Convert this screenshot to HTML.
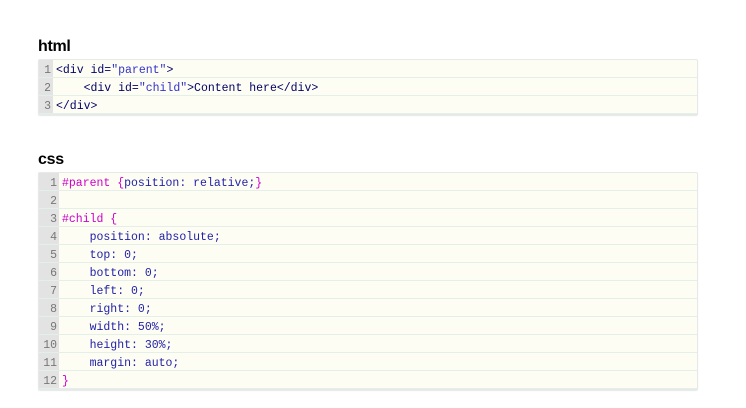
<!DOCTYPE html>
<html><head><style>
body{margin:0;width:746px;height:408px;background:#fff;position:relative;font-family:"Liberation Sans",sans-serif}
h3{position:absolute;left:38px;margin:0;font-size:16px;font-weight:bold;color:#000;letter-spacing:-0.3px}
.blk{position:absolute;left:38px;width:658px;border:1px solid #e6eae6;border-radius:2px;background:#fdfdf3;box-shadow:0 1px 1px #e6e6e6}
.row{height:17px;border-bottom:1px solid #e3efe9;display:flex;font:11.5px/21px "Liberation Mono",monospace;white-space:pre;overflow:hidden}
.n{background:#e3e3e3;color:#777;text-align:right;padding-right:2px;box-sizing:border-box}
.c{padding-left:3px;color:#000066}
.s{color:#3333cc}.m{color:#cc00cc}.b{color:#2222aa}
</style></head><body>
<h3 style="top:38px">html</h3>
<div class="blk" style="top:59px">
<div class="row"><span class="n" style="width:14px">1</span><span class="c">&lt;div id=<span class="s">"parent"</span>&gt;</span></div>
<div class="row"><span class="n" style="width:14px">2</span><span class="c">    &lt;div id=<span class="s">"child"</span>&gt;Content here&lt;/div&gt;</span></div>
<div class="row"><span class="n" style="width:14px">3</span><span class="c">&lt;/div&gt;</span></div>
</div>
<h3 style="top:151px">css</h3>
<div class="blk" style="top:172px">
<div class="row"><span class="n" style="width:20px">1</span><span class="c"><span class="m">#parent {</span><span class="b">position: relative;</span><span class="m">}</span></span></div>
<div class="row"><span class="n" style="width:20px">2</span><span class="c"></span></div>
<div class="row"><span class="n" style="width:20px">3</span><span class="c"><span class="m">#child {</span></span></div>
<div class="row"><span class="n" style="width:20px">4</span><span class="c b">    position: absolute;</span></div>
<div class="row"><span class="n" style="width:20px">5</span><span class="c b">    top: 0;</span></div>
<div class="row"><span class="n" style="width:20px">6</span><span class="c b">    bottom: 0;</span></div>
<div class="row"><span class="n" style="width:20px">7</span><span class="c b">    left: 0;</span></div>
<div class="row"><span class="n" style="width:20px">8</span><span class="c b">    right: 0;</span></div>
<div class="row"><span class="n" style="width:20px">9</span><span class="c b">    width: 50%;</span></div>
<div class="row"><span class="n" style="width:20px">10</span><span class="c b">    height: 30%;</span></div>
<div class="row"><span class="n" style="width:20px">11</span><span class="c b">    margin: auto;</span></div>
<div class="row"><span class="n" style="width:20px">12</span><span class="c"><span class="m">}</span></span></div>
</div>
</body></html>
